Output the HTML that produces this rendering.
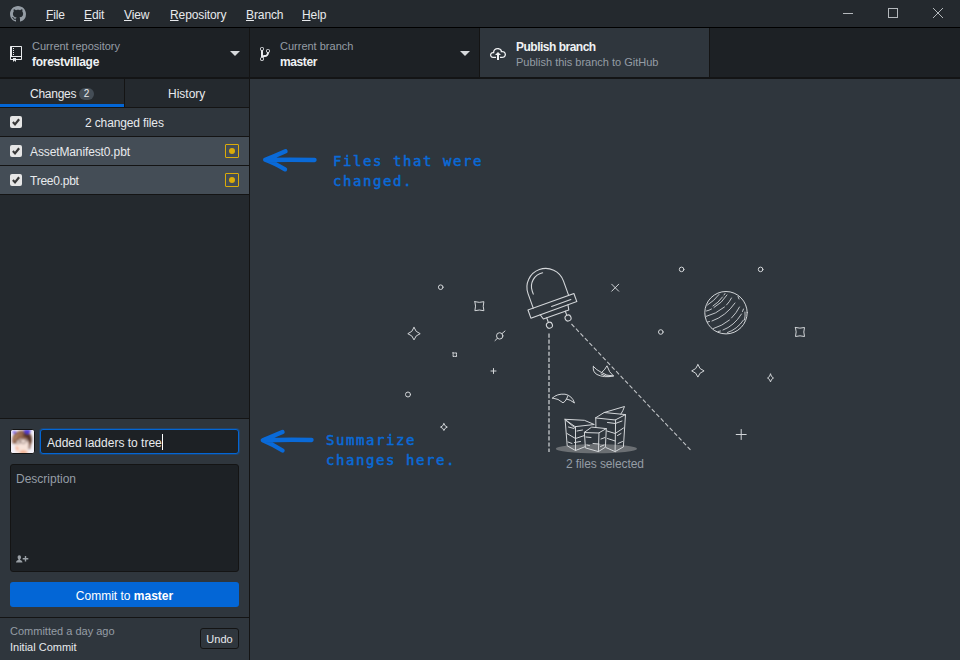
<!DOCTYPE html>
<html lang="en">
<head>
<meta charset="utf-8">
<title>GitHub Desktop</title>
<style>
*{box-sizing:border-box;margin:0;padding:0}
html,body{width:960px;height:660px;overflow:hidden;background:#2f363d}
body{position:relative;font-family:"Liberation Sans",sans-serif;font-size:12px;color:#e8eaed;-webkit-font-smoothing:antialiased}
.abs{position:absolute}
.t{position:absolute;white-space:nowrap;line-height:16px;height:16px}
.b{font-weight:bold}
.dim{color:#959da5}
u{text-decoration:underline;text-decoration-thickness:1px;text-underline-offset:0.5px}

/* title bar */
#titlebar{left:0;top:0;width:960px;height:28px;background:#24292e;border-bottom:1px solid #000}
#titlebar .t{top:7px;color:#e8eaed;letter-spacing:-0.1px}
/* toolbar */
#toolbar{left:0;top:28px;width:960px;height:51px;background:#1d2125;border-bottom:2px solid #131415;z-index:2}
.tb{position:absolute;top:0;height:49px;border-right:1px solid #141414}
#tb-repo{left:0;width:250px}
#tb-branch{left:250px;width:230px}
#tb-publish{left:480px;width:230px;background:#2f363d}
.caret{position:absolute;top:23px;width:0;height:0;border-left:5px solid transparent;border-right:5px solid transparent;border-top:5px solid #d6d9dc}
.tb .l1{top:10px;font-size:11px;color:#959da5}
.tb .l2{top:26px;font-weight:bold;color:#f0f2f4}

/* sidebar */
#sidebar{left:0;top:78px;width:250px;height:582px;background:#24292e;border-right:1px solid #141414}
#tabs{left:0;top:0;width:249px;height:30px;background:#24292e;border-bottom:1px solid #141414}
#tab1{left:0;top:0;width:124px;height:29px;box-shadow:inset 0 -3px 0 #0366d6}
#tab2{left:124px;top:0;width:125px;height:29px;border-left:1px solid #141414}
#badge{left:79px;top:10px;width:15px;height:12px;border-radius:6px;background:#444d56;font-size:10px;line-height:12px;text-align:center;color:#e8eaed}
#hdr{left:0;top:30px;width:249px;height:29px;background:#2f363d;border-bottom:1px solid #141414}
.row{left:0;width:249px;height:29px;background:#444d56;border-bottom:1px solid #141414}
.cb{position:absolute;left:10px;width:12px;height:12px;background:#e6e6e6;border-radius:2px}
.cb svg{position:absolute;left:0;top:0}
.mod{position:absolute;left:225px;top:7px;width:14px;height:14px;border:1px solid #dbab09;border-radius:1px}
.mod i{position:absolute;left:3px;top:3px;width:6px;height:6px;border-radius:3px;background:#dbab09}

#commit{left:0;top:340px;width:249px;height:200px;background:#2f363d;border-top:1px solid #141414}
#avatar{left:10px;top:10px;width:25px;height:25px;border:1px solid #141414;border-radius:3px;overflow:hidden;background:#f3eef0}
#summary{left:40px;top:10px;width:199px;height:25px;background:#1d2125;border:1px solid #0366d6;border-radius:3px;box-shadow:0 0 0 1px rgba(3,102,214,.3)}
#desc{left:10px;top:45px;width:229px;height:108px;background:#1d2125;border:1px solid #141414;border-radius:3px}
#btn{left:10px;top:163px;width:229px;height:25px;background:#0366d6;border-radius:3px;text-align:center;line-height:28px;color:#fff}
#undo{left:0;top:539px;width:249px;height:43px;background:#2f363d;border-top:1px solid #141414}
#undobtn{left:200px;top:10px;width:39px;height:21px;border:1px solid #141414;border-radius:3px;background:#2f363d;text-align:center;line-height:21px;color:#e8eaed;font-size:11px}

/* annotations */
.note{position:absolute;font-family:"DejaVu Sans Mono","Liberation Mono",monospace;font-size:14px;letter-spacing:1.57px;line-height:20px;color:#0a6ad8;white-space:pre;-webkit-text-stroke:0.5px #0a6ad8}
</style>
</head>
<body>

<div id="titlebar" class="abs">
  <svg class="abs" style="left:10px;top:6px" width="16" height="16" viewBox="0 0 16 16"><path fill="#959da5" fill-rule="evenodd" d="M8 0C3.58 0 0 3.58 0 8c0 3.54 2.29 6.53 5.47 7.59.4.07.55-.17.55-.38 0-.19-.01-.82-.01-1.49-2.01.37-2.53-.49-2.69-.94-.09-.23-.48-.94-.82-1.13-.28-.15-.68-.52-.01-.53.63-.01 1.08.58 1.23.82.72 1.21 1.87.87 2.33.66.07-.52.28-.87.51-1.07-1.78-.2-3.64-.89-3.64-3.95 0-.87.31-1.59.82-2.15-.08-.2-.36-1.02.08-2.12 0 0 .67-.21 2.2.82.64-.18 1.32-.27 2-.27.68 0 1.36.09 2 .27 1.53-1.04 2.2-.82 2.2-.82.44 1.1.16 1.92.08 2.12.51.56.82 1.27.82 2.15 0 3.07-1.87 3.75-3.65 3.95.29.25.54.73.54 1.48 0 1.07-.01 1.93-.01 2.2 0 .21.15.46.55.38A8.013 8.013 0 0016 8c0-4.42-3.58-8-8-8z"/></svg>
  <span class="t" style="left:46px"><u>F</u>ile</span>
  <span class="t" style="left:84px"><u>E</u>dit</span>
  <span class="t" style="left:124px"><u>V</u>iew</span>
  <span class="t" style="left:170px"><u>R</u>epository</span>
  <span class="t" style="left:246px"><u>B</u>ranch</span>
  <span class="t" style="left:302px"><u>H</u>elp</span>
  <svg class="abs" style="left:822px;top:0" width="138" height="27" viewBox="0 0 138 27">
    <g stroke="#b4b8bc" stroke-width="1" fill="none" shape-rendering="crispEdges">
      <line x1="21" y1="13.5" x2="31" y2="13.5"/>
      <rect x="66.5" y="8.5" width="9" height="9"/>
    </g>
    <g stroke="#b4b8bc" stroke-width="1" fill="none">
      <line x1="111" y1="8" x2="121" y2="18"/>
      <line x1="121" y1="8" x2="111" y2="18"/>
    </g>
  </svg>
</div>

<div id="toolbar" class="abs">
  <div class="tb" id="tb-repo">
    <svg class="abs" style="left:10px;top:18px" width="12" height="16" viewBox="0 0 12 16"><path fill="#e8eaed" fill-rule="evenodd" d="M4 9H3V8h1v1zm0-3H3v1h1V6zm0-2H3v1h1V4zm0-2H3v1h1V2zm8-1v12c0 .55-.45 1-1 1H6v2l-1.500-1.500L3 16v-2H1c-.55 0-1-.45-1-1V1c0-.55.45-1 1-1h10c.55 0 1 .45 1 1zm-1 10H1v2h2v-1h3v1h5v-2zm0-10H2v9h9V1z"/></svg>
    <span class="t l1" style="left:32px">Current repository</span>
    <span class="t l2" style="left:32px;letter-spacing:-0.28px">forestvillage</span>
    <i class="caret" style="left:230px"></i>
  </div>
  <div class="tb" id="tb-branch">
    <svg class="abs" style="left:10px;top:18px" width="10" height="16" viewBox="0 0 10 16"><path fill="#e8eaed" fill-rule="evenodd" d="M10 5c0-1.110-.89-2-2-2a1.993 1.993 0 0 0-1 3.720v.3c-.02.52-.23.980-.63 1.380-.4.4-.86.610-1.380.63-.83.020-1.480.16-2 .45V4.720a1.993 1.993 0 0 0-1-3.720C.88 1 0 1.890 0 3a2 2 0 0 0 1 1.720v6.560c-.59.350-1 .99-1 1.720 0 1.110.89 2 2 2 1.110 0 2-.89 2-2 0-.53-.2-1-.53-1.360.09-.06.480-.41.590-.47.25-.11.560-.17.940-.17 1.050-.05 1.950-.45 2.750-1.250S8.950 7.770 9 6.730h-.02C9.590 6.370 10 5.730 10 5zM2 1.800c.66 0 1.200.55 1.200 1.200 0 .65-.55 1.200-1.200 1.200C1.350 4.200.8 3.650.8 3c0-.65.55-1.200 1.200-1.200zm0 12.410c-.66 0-1.200-.55-1.200-1.200 0-.65.55-1.200 1.200-1.200.65 0 1.200.55 1.200 1.200 0 .65-.55 1.200-1.200 1.200zm6-8c-.66 0-1.200-.55-1.200-1.200 0-.65.55-1.200 1.200-1.200.65 0 1.200.55 1.200 1.200 0 .65-.55 1.200-1.200 1.200z"/></svg>
    <span class="t l1" style="left:30px">Current branch</span>
    <span class="t l2" style="left:30px;letter-spacing:-0.4px">master</span>
    <i class="caret" style="left:210px"></i>
  </div>
  <div class="tb" id="tb-publish">
    <svg class="abs" style="left:10px;top:18px" width="16" height="16" viewBox="0 0 16 16"><path fill="#f0f2f4" fill-rule="evenodd" d="M7 9H5l3-3 3 3H9v5H7V9zm5-4c0-.44-.91-3-4.500-3C5.080 2 3 3.920 3 6 1.020 6 0 7.520 0 9c0 1.530 1 3 3 3h3v-1.300H3c-1.620 0-1.700-1.420-1.700-1.700 0-.17.050-1.700 1.700-1.700h1.300V6c0-1.390 1.560-2.700 3.200-2.700 2.550 0 3.130 1.550 3.200 1.800v1.200H12c.81 0 2.700.22 2.700 2.200 0 2.090-2.250 2.200-2.700 2.200h-2V12h2c2.080 0 4-1.160 4-3.500C16 6.060 14.080 5 12 5z"/></svg>
    <span class="t l2" style="left:36px;top:11px;letter-spacing:-0.5px">Publish branch</span>
    <span class="t l1" style="left:36px;top:26px">Publish this branch to GitHub</span>
  </div>
</div>

<div id="sidebar" class="abs">
  <div id="tabs" class="abs">
    <div id="tab1" class="abs"><span class="t" style="left:30px;top:8px;letter-spacing:-0.25px">Changes</span><span id="badge" class="abs">2</span></div>
    <div id="tab2" class="abs"><span class="t" style="left:43px;top:8px">History</span></div>
  </div>
  <div id="hdr" class="abs">
    <span class="cb" style="top:8px"><svg width="12" height="12" viewBox="0 0 12 12"><path d="M2.900 6.100 L5 8.400 L9.100 3.300" fill="none" stroke="#383838" stroke-width="2.200"/></svg></span>
    <span class="t" style="left:85px;top:7px;letter-spacing:-0.13px">2 changed files</span>
  </div>
  <div class="row abs" style="top:59px">
    <span class="cb" style="top:8px"><svg width="12" height="12" viewBox="0 0 12 12"><path d="M2.900 6.100 L5 8.400 L9.100 3.300" fill="none" stroke="#383838" stroke-width="2.200"/></svg></span>
    <span class="t" style="left:30px;top:7px;letter-spacing:-0.12px">AssetManifest0.pbt</span>
    <span class="mod"><i></i></span>
  </div>
  <div class="row abs" style="top:88px">
    <span class="cb" style="top:8px"><svg width="12" height="12" viewBox="0 0 12 12"><path d="M2.900 6.100 L5 8.400 L9.100 3.300" fill="none" stroke="#383838" stroke-width="2.200"/></svg></span>
    <span class="t" style="left:30px;top:7px;letter-spacing:-0.25px">Tree0.pbt</span>
    <span class="mod"><i></i></span>
  </div>

  <div id="commit" class="abs">
    <div id="avatar" class="abs"><svg width="23" height="23" viewBox="0 0 23 23" style="display:block">
      <defs><filter id="bl" x="-20%" y="-20%" width="140%" height="140%"><feGaussianBlur stdDeviation="0.9"/></filter></defs>
      <rect width="23" height="23" fill="#f2f0f8"/>
      <g filter="url(#bl)">
        <path d="M4.500 23 L4 13 Q4 8 9 7.500 L16 8 Q17.500 12 17 16 L17.500 23Z" fill="#f7e3da"/>
        <path d="M8 23.500 Q9 20 12.500 20.500 Q15.500 20.500 17 23.500Z" fill="#f2a981"/>
        <path d="M4.300 15.500 Q5.500 17 7 16.500 L7.800 20 Q6 21 5 19.500Z" fill="#f3b598"/>
        <path d="M1.300 12.500 Q0.300 5 6 1.800 Q11 -0.500 16.500 1.500 Q21.500 4 21 10 Q20.800 13.500 19.800 14.800 L19 19.500 L17.400 19 Q17.900 13.500 16.500 9.800 Q13 8.200 9.500 8.800 Q6 9.800 4.500 13.800 Q3 14.800 1.300 12.500Z" fill="#8d6048"/>
        <path d="M13.500 2 Q20 3 20.500 9 Q20.500 13 19.300 14.500 Q18 11 16.500 9.300 Q15 6.500 11.500 5.500Z" fill="#54352a"/>
        <path d="M2.800 9 Q4 4 9 2.500 Q6.500 5 6 8.500 Q4.500 10 3.500 12Z" fill="#b08465"/>
        <path d="M7 4.500 Q10 3 13 4.500 Q10 5 8 7Z" fill="#a27253"/>
        <ellipse cx="3.300" cy="2.300" rx="1.700" ry="1.300" fill="#6a52e6"/>
        <path d="M12.800 -0.500 L19.500 -0.500 Q20 2.200 18 3.600 Q15.500 4.600 13.500 2.600Z" fill="#4f3ad8"/>
        <ellipse cx="7" cy="11.800" rx="2" ry="1.900" fill="none" stroke="#4a3a3a" stroke-width="0.750"/>
        <ellipse cx="12.300" cy="11.200" rx="2.800" ry="2.200" fill="none" stroke="#5a4848" stroke-width="0.750"/>
        <path d="M9 11.400 L9.600 11.200 M15 10.600 L17.200 10" stroke="#4a3838" stroke-width="0.700" fill="none"/>
      </g>
    </svg></div>
    <div id="summary" class="abs"><span class="t" style="left:6px;top:5px">Added ladders to tree</span><i class="abs" style="left:121px;top:4px;width:1px;height:16px;background:#fff"></i></div>
    <div id="desc" class="abs"><span class="t dim" style="left:5px;top:6px">Description</span><svg class="abs" style="left:5px;top:90px" width="13" height="9" viewBox="0 0 13 9"><path fill="#9aa0a6" d="M3.300 0.300 C4.400 0.300 5 1.100 5 2.200 C5 3.100 4.600 3.900 4.100 4.300 L4.100 4.900 C5.300 5.200 6.300 5.800 6.500 7.500 L0 7.500 C0.200 5.800 1.200 5.200 2.400 4.900 L2.400 4.300 C1.900 3.900 1.600 3.100 1.600 2.200 C1.600 1.100 2.200 0.300 3.300 0.300Z M8.800 1 H10.200 V3.100 H12.300 V4.500 H10.200 V6.600 H8.800 V4.500 H6.700 V3.100 H8.800Z"/></svg></div>
    <div id="btn" class="abs">Commit to <b>master</b></div>
  </div>
  <div id="undo" class="abs">
    <span class="t dim" style="left:10px;top:5px;font-size:11px">Committed a day ago</span>
    <span class="t" style="left:10px;top:21px;font-size:11px">Initial Commit</span>
    <div id="undobtn" class="abs">Undo</div>
  </div>
</div>

<!-- annotations -->
<div class="note" style="left:333px;top:151px">Files that were
changed.</div>
<div class="note" style="left:326px;top:430px">Summarize
changes here.</div>

<svg id="art" class="abs" style="left:0;top:0" width="960" height="660" viewBox="0 0 960 660">
  <g fill="none" stroke="#d3d6d9" stroke-width="1" stroke-linecap="round" stroke-linejoin="round">
<circle cx="440.7" cy="287.2" r="2.3"/>
<circle cx="681.6" cy="269.4" r="2.3"/>
<circle cx="760.6" cy="269.4" r="2.3"/>
<circle cx="660.8" cy="332" r="2.3"/>
<circle cx="408" cy="394.5" r="2.5"/>
<path d="M474.9 301.7 Q479.4 303.05 483.9 301.7 Q482.54999999999995 306.2 483.9 310.7 Q479.4 309.34999999999997 474.9 310.7 Q476.25 306.2 474.9 301.7Z"/>
<path d="M795.5 327.5 Q800 328.85 804.5 327.5 Q803.15 332 804.5 336.5 Q800 335.15 795.5 336.5 Q796.85 332 795.5 327.5Z"/>
<path d="M453.0 352.9 Q454.8 353.26 456.6 352.9 Q456.24 354.7 456.6 356.5 Q454.8 356.14 453.0 356.5 Q453.36 354.7 453.0 352.9Z"/>
<path d="M414 327.5 Q415.364 332.336 420.2 333.7 Q415.364 335.06399999999996 414 339.9 Q412.636 335.06399999999996 407.8 333.7 Q412.636 332.336 414 327.5Z"/>
<path d="M697.9 364.7 Q699.264 369.536 704.1 370.9 Q699.264 372.26399999999995 697.9 377.09999999999997 Q696.536 372.26399999999995 691.6999999999999 370.9 Q696.536 369.536 697.9 364.7Z"/>
<path d="M443.9 423.70000000000005 Q444.64799999999997 426.35200000000003 447.29999999999995 427.1 Q444.64799999999997 427.848 443.9 430.5 Q443.152 427.848 440.5 427.1 Q443.152 426.35200000000003 443.9 423.70000000000005Z"/>
<path d="M770.5 374.1 Q771.16 377.142 773.5 378 Q771.16 378.858 770.5 381.9 Q769.84 378.858 767.5 378 Q769.84 377.142 770.5 374.1Z"/>
<circle cx="499.7" cy="335.9" r="3.2"/><path d="M495 340.600 L497.400 338.300 M502 333.600 L505 331"/>
<path d="M491 371 H496 M493.500 368.500 V373.500"/>
<path d="M736.200 434.500 H746.200 M741.200 429.500 V439.500"/>
<path d="M611.700 284.200 L618.700 291.200 M618.700 284.200 L611.700 291.200"/>
<circle cx="726" cy="312.700" r="21.200"/>
<g stroke-width="0.900"><path d="M707.500 305 Q714 301 719 294.500"/><path d="M713 306 Q718 303 722.500 297 M724 295 L725 293.500"/><path d="M706.500 311 Q709 310.500 711.500 309 M714 307.500 Q722 303 727 295"/><path d="M706 316.500 Q716 314 724.500 307 M726.500 305 Q729.500 302 731.500 298"/><path d="M707.500 322 L709.500 321.500 M712 321 Q726 316 735 303"/><path d="M713.500 328.500 Q722 326 729.500 320 M731.500 318 Q736.500 313 739.500 307"/><path d="M718 331.500 L720.500 331 M723 330 Q734 326 741.500 314 M742.500 311.500 L743.500 309"/><path d="M727.500 332.500 Q737 329.500 743.500 320"/><path d="M738 296.500 L739 299 M745 312 Q745.500 316 744.500 320"/></g>
</g>
<g transform="translate(552.400 305.800) rotate(-19.800)" fill="none" stroke="#d3d6d9" stroke-width="1.100" stroke-linecap="round" stroke-linejoin="round"><rect x="-24.400" y="-4.300" width="48.800" height="8.600"/><path d="M-18.800 -4.300 V-19.700 A18.800 18.800 0 0 1 18.800 -19.700 V-4.300"/><path d="M-14 -17.500 V-20.500 A14 14 0 0 1 2 -34.400"/><path d="M-1 0.300 H19.500"/><path d="M-14.500 4.300 L-13 9.400 H14 L15 4.300"/><path d="M-9.400 9.400 V14.300 M10.300 9.400 V13.800"/><circle cx="-9.400" cy="17.300" r="3"/><circle cx="10.600" cy="16.800" r="3"/></g>
<path d="M549 333.500 V452" stroke="#a4a8ac" stroke-width="1.700" stroke-dasharray="4.200 1.850" fill="none"/>
<path d="M571.500 324 L692 451.500" stroke="#c0c3c6" stroke-width="1.100" stroke-dasharray="4.200 2.300" fill="none"/>
<ellipse cx="596.400" cy="448.700" rx="40.600" ry="4.600" fill="#6b6f73"/>
<g fill="none" stroke="#d3d6d9" stroke-width="1" stroke-linejoin="round" stroke-linecap="round"><path d="M593.300 366.500 Q592.500 372 597 374.500 Q604 378 613.500 376 Q609 372.500 607 365.800 Q604.500 370.500 601.500 372.500 Q596.500 370 593.300 366.500Z"/><path d="M601.500 372.500 Q606 376 613.500 376 M601 374 Q605 376.500 610 376.500"/><path d="M552.500 398 Q557 393.500 565 394.200 Q572 395.500 574.500 403 Q570 399.500 566.500 399 Q565.500 401.500 563 402.800 Q558.500 398.500 552.500 398Z"/><path d="M566.500 399 L568 395.800"/></g>
<g fill="none" stroke="#d3d6d9" stroke-width="1" stroke-linejoin="round" stroke-linecap="round"><path d="M565.100 419.300 L584.400 420.300 L594.300 424.500 L575.500 426.600Z"/><path d="M565.100 419.300 L567.200 445.800 L575.500 450.500 L575.500 426.600"/><path d="M575.500 450.500 L584.800 446.800 M566 420.500 L574.500 427.500 M567 433.500 L575.500 438.500 L584.500 435.500 M568.500 427 L574 428.500 M577 431 L582.500 430 M568 442 L572 443.500 M574.500 442.500 L580.500 441.500"/><path d="M584.400 432.300 L591.700 427.100 L606.300 428.600 L599 432.800Z"/><path d="M584.400 432.300 L585.400 447.900 L598.400 451.600 L599 432.800 M606.300 428.600 L605.400 447.200 L598.400 451.600"/><path d="M586 437 L591 437.500 M593 443.500 L599 444 M601 439 L605 437.500 M587 445 L589.500 445.600 M600.500 446.500 L604 445"/><path d="M595.800 417.700 L604.200 412.500 L625.500 414.600 L615.600 419.800Z"/><path d="M595.800 417.700 L595.900 426.800 M615.600 419.800 L615.100 451.600 L623.400 446.900 L625.500 414.600 M615.100 451.600 L606 447.600"/><path d="M604.200 412.500 L624.500 406.500 Q623 411 620.800 414.200"/><path d="M607.500 422.500 L615.300 423.500 L622 421 M607 431 L615.200 433.500 L623.500 428 M607.500 438.500 L615.200 441 M618 443.500 L622.500 441.500 M617.500 435.500 L621 433.500"/></g>
  <g fill="none" stroke="#0a6ad8" stroke-width="4.400" stroke-linecap="round" stroke-linejoin="round">
    <path d="M314.500 160 Q290 159.500 266 160 M285.500 151.300 Q274 156.500 265.200 159.800 Q274 163 285 169.300"/>
    <path d="M311.500 440 Q288 439.500 264 440.200 M282.500 432 Q272 436.500 262.800 440.200 Q272 444 282.500 450.500"/>
  </g>
</svg>

<span class="t dim" style="left:566px;top:456px;letter-spacing:-0.1px">2 files selected</span>

</body>
</html>
